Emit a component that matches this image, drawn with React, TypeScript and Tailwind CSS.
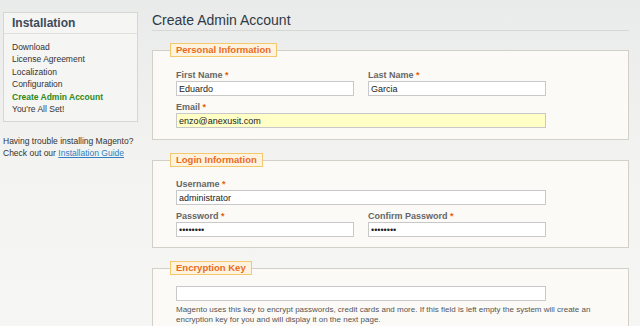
const FONT = { fontFamily: '"Liberation Sans", Arial, sans-serif' }

const STEPS = [
  { label: 'Download' },
  { label: 'License Agreement' },
  { label: 'Localization' },
  { label: 'Configuration' },
  { label: 'Create Admin Account', active: true },
  { label: "You're All Set!" },
]

function Label({ text }: { text: string }) {
  return (
    <label className="block h-[11px] text-[9px] font-bold leading-[11px] text-[#666]">
      {text} <span className="text-[#eb5e00]">*</span>
    </label>
  )
}

function Input({ value, yellow, password }: { value: string; yellow?: boolean; password?: boolean }) {
  return (
    <input
      readOnly
      type={password ? 'password' : 'text'}
      value={value}
      className={`block h-[15px] w-full border border-[#c8c8c8] px-[2px] text-[9px] leading-[13px] text-[#222] outline-none ${
        yellow ? 'bg-[#ffffc6]' : 'bg-white'
      }`}
      style={FONT}
    />
  )
}

function Section({ title, children, className = '' }: { title: string; children: React.ReactNode; className?: string }) {
  return (
    <fieldset
      className={`border border-[#d3d0c8] bg-[#fbfaf7] px-[23px] ${className}`}
    >
      <legend className="-ml-[6px] h-[14px] border border-[#f4c86e] bg-[#fdf3df] px-[5px] text-[9.5px] font-bold leading-[12px] text-[#ea6b22]">
        {title}
      </legend>
      {children}
    </fieldset>
  )
}

export default function App() {
  return (
    <div
      className="flex h-[326px] w-[640px] overflow-hidden bg-gradient-to-b from-[#e9ebea] via-[#f3f3f1] to-[#f6f6f4]"
      style={FONT}
    >
      {/* Sidebar */}
      <div className="ml-[3px] w-[135px] shrink-0 pt-[12px]">
        <div className="border border-[#d6d6d4] bg-[#f5f5f3]">
          <div className="h-[21px] border-b border-[#e0e0de] px-[8px] text-[12px] font-bold leading-[21px] text-[#3b4a5a]">
            Installation
          </div>
          <ul className="px-[8px] pb-[6px] pt-[7px]">
            {STEPS.map((s) => (
              <li
                key={s.label}
                className={`text-[8.5px] leading-[12.4px] ${s.active ? 'font-bold text-[#2a8a1f]' : 'text-[#333]'}`}
              >
                {s.label}
              </li>
            ))}
          </ul>
        </div>
        <p className="mt-[14px] text-[8.5px] leading-[11.5px] text-[#333]">
          Having trouble installing Magento?
          <br />
          Check out our{' '}
          <a className="text-[#2f7fc1] underline">Installation Guide</a>
        </p>
      </div>

      {/* Main */}
      <div className="ml-[14px] w-[477px] shrink-0">
        <h1 className="mt-[12px] h-[19px] border-b border-[#d6d8d8] text-[14px] leading-[16px] text-[#2e3a46]">
          Create Admin Account
        </h1>

        <Section title="Personal Information" className="mt-[12px] pb-[11px]">
          <div className="mt-[13px] flex gap-[14px]">
            <div className="w-[178px]">
              <Label text="First Name" />
              <Input value="Eduardo" />
            </div>
            <div className="w-[178px]">
              <Label text="Last Name" />
              <Input value="Garcia" />
            </div>
          </div>
          <div className="mt-[6px] w-[370px]">
            <Label text="Email" />
            <Input value="enzo@anexusit.com" yellow />
          </div>
        </Section>

        <Section title="Login Information" className="mt-[13px] pb-[10px]">
          <div className="mt-[12px] w-[370px]">
            <Label text="Username" />
            <Input value="administrator" />
          </div>
          <div className="mt-[6px] flex gap-[14px]">
            <div className="w-[178px]">
              <Label text="Password" />
              <Input value="••••••••" password />
            </div>
            <div className="w-[178px]">
              <Label text="Confirm Password" />
              <Input value="••••••••" password />
            </div>
          </div>
        </Section>

        <Section title="Encryption Key" className="mt-[13px] pb-[20px]">
          <div className="mt-[11px] w-[370px]">
            <Input value="" />
          </div>
          <p className="mt-[4px] text-[8px] leading-[9.5px] text-[#555]">
            Magento uses this key to encrypt passwords, credit cards and more. If this field is left empty the system will create an
            encryption key for you and will display it on the next page.
          </p>
        </Section>
      </div>
    </div>
  )
}
